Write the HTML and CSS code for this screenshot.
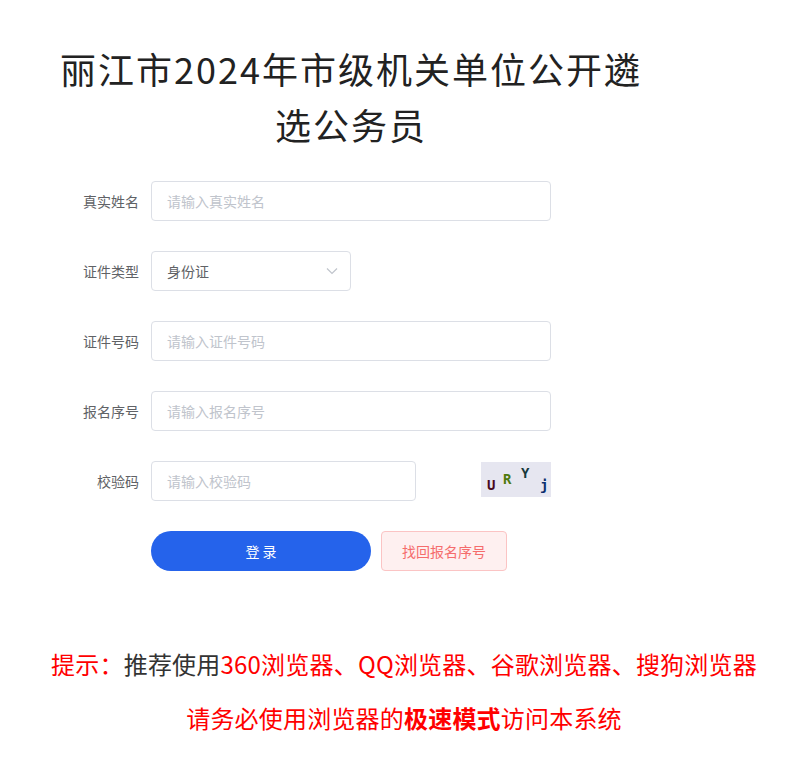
FILE: index.html
```html
<!DOCTYPE html>
<html lang="zh-CN">
<head>
    <meta charset="UTF-8">
    <meta name="viewport" content="width=device-width, initial-scale=1.0">
    <title>登录</title>
    <link rel="stylesheet" href="styles.css">
</head>
<body>
    <div class="container">
        <h1 class="title">丽江市2024年市级机关单位公开遴选公务员</h1>
        <form class="login-form">
            <div class="form-row">
                <label class="form-label">真实姓名</label>
                <div class="form-control">
                    <input type="text" class="input" placeholder="请输入真实姓名">
                </div>
            </div>
            <div class="form-row">
                <label class="form-label">证件类型</label>
                <div class="form-control">
                    <div class="select">
                        <span>身份证</span>
                        <svg class="arrow" width="12" height="8" viewBox="0 0 12 8"><path d="M1 1.5 L6 6.5 L11 1.5" fill="none" stroke="#c0c4cc" stroke-width="1.2"/></svg>
                    </div>
                </div>
            </div>
            <div class="form-row">
                <label class="form-label">证件号码</label>
                <div class="form-control">
                    <input type="text" class="input" placeholder="请输入证件号码">
                </div>
            </div>
            <div class="form-row">
                <label class="form-label">报名序号</label>
                <div class="form-control">
                    <input type="text" class="input" placeholder="请输入报名序号">
                </div>
            </div>
            <div class="form-row">
                <label class="form-label">校验码</label>
                <div class="form-control code-control">
                    <input type="text" class="input code-input" placeholder="请输入校验码">
                    <div class="captcha">
                        <span class="c1">U</span>
                        <span class="c2">R</span>
                        <span class="c3">Y</span>
                        <span class="c4">j</span>
                    </div>
                </div>
            </div>
            <div class="form-row buttons">
                <div class="form-label"></div>
                <button type="button" class="btn-login">登 录</button>
                <button type="button" class="btn-find">找回报名序号</button>
            </div>
        </form>
        <div class="tips">
            <p><span class="red">提示：</span>推荐使用<span class="red">360浏览器、QQ浏览器、谷歌浏览器、搜狗浏览器</span></p>
            <p class="red">请务必使用浏览器的<b>极速模式</b>访问本系统</p>
        </div>
    </div>
</body>
</html>
```

FILE: styles.css
```css
/* login page */
body {
    margin: 0;
    font-family: "Noto Sans CJK SC", "Noto Sans", sans-serif;
    background: #fff;
    color: #333;
}
.container {
    padding: 40px 0 0 51px;
}
.title {
    width: 600px;
    margin: 0;
    font-size: 36px;
    font-weight: normal;
    line-height: 56px;
    letter-spacing: 2px;
    text-align: center;
    color: #222;
}
.login-form {
    margin-top: 29px;
    width: 500px;
}
.form-row {
    display: flex;
    align-items: center;
    height: 40px;
    margin-bottom: 30px;
}
.form-label {
    width: 100px;
    box-sizing: border-box;
    padding-right: 12px;
    text-align: right;
    font-size: 14px;
    color: #606266;
}
.form-control {
    width: 400px;
}
.input {
    width: 100%;
    height: 40px;
    box-sizing: border-box;
    border: 1px solid #dcdfe6;
    border-radius: 4px;
    padding: 0 15px;
    font-size: 14px;
    font-family: inherit;
    color: #606266;
    outline: none;
}
.input::placeholder {
    color: #c0c4cc;
}
.select {
    width: 200px;
    height: 40px;
    box-sizing: border-box;
    border: 1px solid #dcdfe6;
    border-radius: 4px;
    padding: 0 15px;
    display: flex;
    align-items: center;
    justify-content: space-between;
    font-size: 14px;
    color: #606266;
}
.arrow {
    margin-right: -3px;
}
.code-control {
    display: flex;
    justify-content: space-between;
    align-items: center;
}
.code-input {
    width: 265px;
}
.captcha {
    position: relative;
    width: 70px;
    height: 35px;
    margin-top: -3px;
    background: #e6e6f0;
    font-family: "DejaVu Sans Mono", monospace;
    font-weight: bold;
    font-size: 14px;
}
.captcha span {
    position: absolute;
}
.c1 { left: 6px; top: 15px; color: #4a0a1e; }
.c2 { left: 22px; top: 9px; color: #4e7a0c; }
.c3 { left: 40px; top: 3px; color: #17393b; }
.c4 { left: 59px; top: 15px; color: #0b2f6e; }
.buttons {
    margin-bottom: 0;
}
.btn-login {
    width: 220px;
    height: 40px;
    border: none;
    border-radius: 20px;
    background: #2563eb;
    color: #fff;
    font-size: 14px;
    font-family: inherit;
    cursor: pointer;
}
.btn-find {
    margin-left: 10px;
    width: 126px;
    height: 40px;
    border: 1px solid #fbc4c4;
    border-radius: 4px;
    background: #fef0f0;
    color: #f56c6c;
    font-size: 14px;
    font-family: inherit;
    cursor: pointer;
}
.tips {
    width: 706px;
    margin-top: 66px;
    text-align: center;
    font-size: 24px;
    line-height: 54px;
    letter-spacing: 0.2px;
    color: #333;
}
.tips p {
    margin: 0;
}
.red {
    color: #ff0000;
}
```
